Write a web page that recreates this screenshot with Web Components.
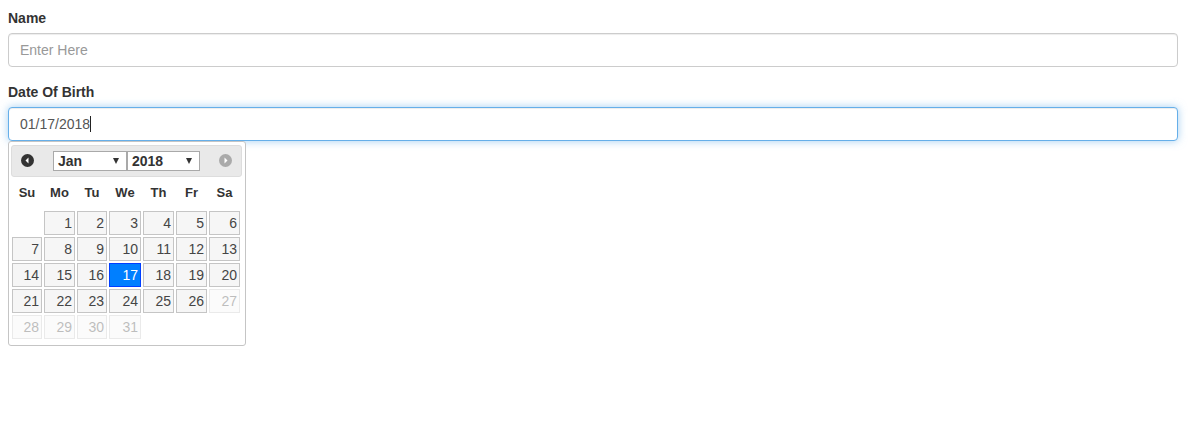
<!DOCTYPE html>
<html>
<head>
<meta charset="utf-8">
<title>Date of birth</title>
<style>
  html, body { margin: 0; background: #fff; }
  body { padding: 8px; font: 14px/20px "Liberation Sans", Arial, sans-serif; color: #333; }
  form-page { width: 1170px; }
</style>
</head>
<body>
<form-page>
  <form-field label="Name">
    <text-box placeholder>Enter Here</text-box>
  </form-field>
  <form-field label="Date Of Birth">
    <text-box focused>01/17/2018</text-box>
    <date-picker month="Jan" year="2018" selected="17" last-enabled="26"></date-picker>
  </form-field>
</form-page>

<script>
class FormPage extends HTMLElement {
  constructor() {
    super()
    this.attachShadow({mode: 'open'}).innerHTML = `<style>
        :host { display: flex; flex-direction: column; gap: 15px; }
      </style>
      <slot></slot>`
  }
}

class FormField extends HTMLElement {
  constructor() {
    super()
    this.attachShadow({mode: 'open'}).innerHTML = `<style>
        :host { display: block; }
        label { display: block; font-weight: bold; margin-bottom: 5px; color: #333; }
      </style>
      <label></label>
      <slot></slot>`
  }

  connectedCallback() {
    this.shadowRoot.querySelector('label').textContent = this.getAttribute('label')
  }
}

class TextBox extends HTMLElement {
  constructor() {
    super()
    this.attachShadow({mode: 'open'}).innerHTML = `<style>
        :host {
          display: flex;
          align-items: center;
          box-sizing: border-box;
          height: 34px;
          padding: 6px 11px;
          background: #fff;
          border: 1px solid #ccc;
          border-radius: 4px;
          color: #555;
          box-shadow: inset 0 1px 1px rgba(0,0,0,.075);
        }
        :host([placeholder]) { color: #999; }
        :host([focused]) {
          border-color: #66afe9;
          box-shadow: inset 0 1px 1px rgba(0,0,0,.075), 0 0 8px rgba(102,175,233,.6);
        }
        .caret { display: none; width: 1px; height: 16px; background: #222; }
        :host([focused]) .caret { display: block; }
      </style>
      <slot></slot><span class="caret"></span>`
  }
}

class MonthSelect extends HTMLElement {
  constructor() {
    super()
    this.attachShadow({mode: 'open'}).innerHTML = `<style>
        :host {
          display: flex;
          align-items: center;
          justify-content: space-between;
          box-sizing: border-box;
          height: 20px;
          padding: 0 7px 0 4px;
          background: #fff;
          border: 1px solid #a9a9a9;
          font-weight: bold;
          font-size: 14px;
          color: #333;
        }
        svg { display: block; }
      </style>
      <slot></slot>
      <svg width="6" height="6" viewBox="0 0 6 6"><path d="M0 0H6L3 6Z" fill="#333"/></svg>`
  }
}

class NavArrow extends HTMLElement {
  constructor() {
    super()
    this.attachShadow({mode: 'open'}).innerHTML = `<style>
        :host { display: block; width: 13px; height: 13px; margin-top: -2px; color: #333; }
        :host([disabled]) { color: #aaa; }
        svg { display: block; }
      </style>
      <svg width="13" height="13" viewBox="0 0 13 13">
        <circle cx="6.5" cy="6.5" r="6.5" fill="currentColor"/>
        <path fill="#fff"/>
      </svg>`
  }

  connectedCallback() {
    const d = this.getAttribute('dir') === 'next' ? 'M5.5 3.5L8.5 6.5L5.5 9.5Z' : 'M7.5 3.5L4.5 6.5L7.5 9.5Z'
    this.shadowRoot.querySelector('path').setAttribute('d', d)
  }
}

class DayCell extends HTMLElement {
  constructor() {
    super()
    this.attachShadow({mode: 'open'}).innerHTML = `<style>
        :host {
          display: block;
          box-sizing: border-box;
          height: 24px;
          padding: 0 2px;
          line-height: 22px;
          text-align: right;
          font-size: 14px;
          color: #454545;
          background: #f6f6f6;
          border: 1px solid #c5c5c5;
        }
        :host([selected]) { background: #007fff; border-color: #003eff; color: #fff; }
        :host([disabled]) { opacity: .35; }
      </style>
      <slot></slot>`
  }
}

class DatePicker extends HTMLElement {
  constructor() {
    super()
    this.attachShadow({mode: 'open'}).innerHTML = `<style>
        :host {
          display: block;
          box-sizing: border-box;
          width: 238px;
          height: 205px;
          padding: 3px 3px 0 2px;
          background: #fff;
          border: 1px solid #c5c5c5;
          border-radius: 3px;
          --columns: 30px 31px 30px 32px 31px 31px 31px;
        }
        .header {
          display: flex;
          align-items: center;
          box-sizing: border-box;
          height: 32px;
          padding: 0 9px;
          background: #e9e9e9;
          border: 1px solid #ddd;
          border-radius: 3px;
        }
        .selects { display: flex; margin: 0 auto; }
        .selects month-select:first-child { width: 74px; }
        .selects month-select:last-child { width: 73px; }
        .weekdays, .days {
          display: grid;
          grid-template-columns: var(--columns);
          column-gap: 2px;
          margin-left: 1px;
        }
        .weekdays {
          box-sizing: border-box;
          height: 30px;
          padding-top: 1px;
          margin-bottom: 4px;
          line-height: 30px;
          text-align: center;
          font-size: 13px;
          font-weight: bold;
          color: #333;
        }
        .days { row-gap: 2px; }
      </style>
      <div class="header">
        <nav-arrow dir="prev"></nav-arrow>
        <div class="selects">
          <month-select id="month"></month-select>
          <month-select id="year"></month-select>
        </div>
        <nav-arrow dir="next" disabled></nav-arrow>
      </div>
      <div class="weekdays"></div>
      <div class="days"></div>`
  }

  connectedCallback() {
    const root = this.shadowRoot,
      selected = +this.getAttribute('selected'),
      lastEnabled = +this.getAttribute('last-enabled')
    root.querySelector('#month').textContent = this.getAttribute('month')
    root.querySelector('#year').textContent = this.getAttribute('year')
    root.querySelector('.weekdays').innerHTML = ['Su', 'Mo', 'Tu', 'We', 'Th', 'Fr', 'Sa']
      .map(d => `<span>${d}</span>`).join('')
    // January 2018 starts on a Monday, so one blank cell first
    let days = '<span></span>'
    for (let i = 1; i <= 31; i++) {
      const state = i === selected ? 'selected' : i > lastEnabled ? 'disabled' : ''
      days += `<day-cell ${state}>${i}</day-cell>`
    }
    root.querySelector('.days').innerHTML = days
  }
}

customElements.define('form-page', FormPage)
customElements.define('form-field', FormField)
customElements.define('text-box', TextBox)
customElements.define('month-select', MonthSelect)
customElements.define('nav-arrow', NavArrow)
customElements.define('day-cell', DayCell)
customElements.define('date-picker', DatePicker)
</script>
</body>
</html>
